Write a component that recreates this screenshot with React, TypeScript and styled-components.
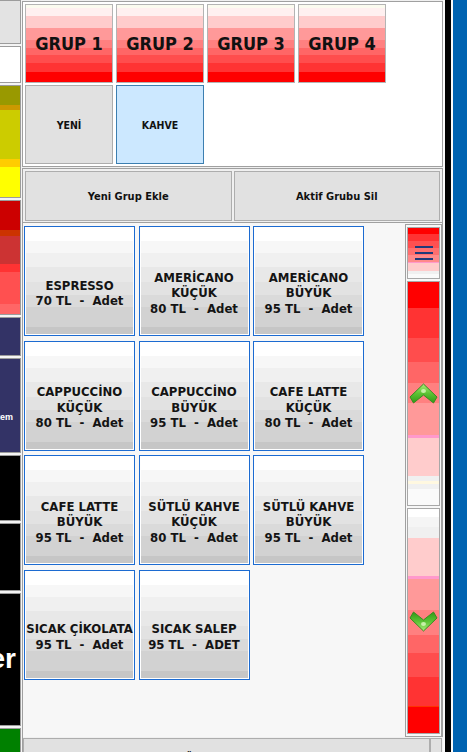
import React from "react";
import styled, { createGlobalStyle } from "styled-components";

const GlobalStyle = createGlobalStyle`
  html, body {
    margin: 0;
    padding: 0;
    overflow: hidden;
    background: #f0f0f0;
  }
  body {
    font-family: "DejaVu Sans Condensed", "DejaVu Sans", "Liberation Sans", sans-serif;
    font-stretch: condensed;
    color: #111;
  }
`;

const Screen = styled.div`
  display: flex;
  width: 467px;
  height: 752px;
  overflow: hidden;
`;

/* ---- left strip of clipped category tiles ---- */

const LeftStrip = styled.div`
  width: 22px;
  flex: none;
  display: flex;
  flex-direction: column;
  gap: 2px;
  background: #f4f4f4;
  overflow: hidden;
`;

const SideTile = styled.div<{ $h: number; $bg: string; $fs?: number; $pt?: number; $pr?: number }>`
  flex: none;
  width: 21px;
  height: ${(p) => p.$h}px;
  box-sizing: border-box;
  border: 1px solid #9c9c9c;
  border-left: none;
  background: ${(p) => p.$bg};
  display: flex;
  align-items: ${(p) => (p.$pt !== undefined ? "flex-start" : "center")};
  justify-content: flex-end;
  padding-top: ${(p) => p.$pt ?? 0}px;
  padding-right: ${(p) => p.$pr ?? 0}px;
  overflow: hidden;
  color: #fff;
  font-family: "Liberation Sans", sans-serif;
  font-weight: bold;
  font-size: ${(p) => p.$fs ?? 10}px;
  line-height: 1;
  white-space: nowrap;
`;

/* ---- main panel ---- */

const Main = styled.div`
  width: 421px;
  flex: none;
  display: flex;
  flex-direction: column;
  background: #f0f0f0;
  overflow: hidden;
`;

const GroupPanel = styled.div`
  flex: none;
  margin-top: 1px;
  height: 166px;
  box-sizing: border-box;
  border: 1px solid #a0a0a0;
  background: #fff;
  padding: 2px;
  display: flex;
  flex-direction: column;
  gap: 2px;
`;

const ButtonRow = styled.div`
  display: flex;
  gap: 3px;
`;

const GroupButton = styled.div`
  width: 88px;
  height: 79px;
  box-sizing: border-box;
  border: 1px solid #b4b4b4;
  background: linear-gradient(
    to bottom,
    #fbfbef 0 3.8%,
    #fff0f0 3.8% 14%,
    #ffcccc 14% 30.4%,
    #ff9999 30.4% 45.6%,
    #ff8080 45.6% 55.7%,
    #ff6666 55.7% 64.6%,
    #ff4d4d 64.6% 74.7%,
    #ff3333 74.7% 87.3%,
    #ff0000 87.3% 100%
  );
  display: flex;
  align-items: center;
  justify-content: center;
  font-weight: bold;
  font-size: 18px;
  color: #111;
`;

const SubButton = styled.div<{ $active?: boolean }>`
  width: 88px;
  height: 79px;
  box-sizing: border-box;
  border: 1px solid ${(p) => (p.$active ? "#3c7fb1" : "#adadad")};
  background: ${(p) => (p.$active ? "#cce8ff" : "#e1e1e1")};
  display: flex;
  align-items: center;
  justify-content: center;
  font-weight: bold;
  font-size: 10.5px;
`;

const ActionPanel = styled.div`
  flex: none;
  margin-top: 1px;
  height: 55px;
  box-sizing: border-box;
  border: 1px solid #a0a0a0;
  padding: 2px 2px 1px 2px;
  display: flex;
  gap: 2px;
`;

const ActionButton = styled.div`
  flex: 1;
  box-sizing: border-box;
  border: 1px solid #adadad;
  background: #e1e1e1;
  display: flex;
  align-items: center;
  justify-content: center;
  font-weight: bold;
  font-size: 11px;
`;

const ProductArea = styled.div`
  flex: none;
  height: 514px;
  box-sizing: border-box;
  display: flex;
  border-left: 1px solid #a0a0a0;
  border-right: 1px solid #a0a0a0;
  background: #f7f7f7;
  padding: 3px 0 0 1px;
`;

const ProductGrid = styled.div`
  display: grid;
  grid-template-columns: repeat(3, 111px);
  grid-auto-rows: 110px;
  column-gap: 3.5px;
  row-gap: 4.5px;
  align-content: start;
`;

const ProductButton = styled.div`
  box-sizing: border-box;
  border: 1px solid #1c6bd1;
  box-shadow: inset 0 0 0 1px #fff;
  background: linear-gradient(
    to bottom,
    #ffffff 0 12.7%,
    #f7f7f7 12.7% 24.5%,
    #f0f0f0 24.5% 37%,
    #e8e8e8 37% 51%,
    #e2e2e2 51% 63%,
    #dadada 63% 74.5%,
    #d2d2d2 74.5% 92.7%,
    #c6c6c6 92.7% 100%
  );
  display: flex;
  align-items: center;
  justify-content: center;
  padding-top: 24px;
  text-align: center;
  white-space: pre;
  font-weight: bold;
  font-size: 13px;
  line-height: 15.5px;
  color: #141414;
`;

const Spacer = styled.div`
  flex: 1;
`;

const ScrollColumn = styled.div`
  width: 37px;
  flex: none;
  margin-top: -2px;
  height: 513px;
  box-sizing: border-box;
  border: 1px solid #a0a0a0;
  padding: 2px 1px;
  display: flex;
  flex-direction: column;
  gap: 2px;
`;

const ScrollButton = styled.div<{ $h: number; $bg: string }>`
  height: ${(p) => p.$h}px;
  flex: none;
  box-sizing: border-box;
  border: 1px solid #a8a8a8;
  background: ${(p) => p.$bg};
  display: flex;
  align-items: center;
  justify-content: center;
`;

const ChevronSvg = styled.svg<{ $down?: boolean }>`
  display: block;
  transform: ${(p) => (p.$down ? "scaleY(-1)" : "none")};
`;

const BottomBar = styled.div`
  height: 40px;
  flex: none;
  box-sizing: border-box;
  border-left: 1px solid #a0a0a0;
  padding: 1px 1px 0 0;
  display: flex;
`;

const BottomButton = styled.div<{ $w?: number }>`
  ${(p) => (p.$w ? `width: ${p.$w}px; flex: none;` : "flex: 1;")}
  height: 40px;
  box-sizing: border-box;
  border: 1px solid #adadad;
  background: #e1e1e1;
  text-align: center;
  padding-top: 12px;
  font-weight: bold;
  font-size: 11px;
`;

const RightEdge = styled.div`
  flex: 1;
  background: linear-gradient(
    to right,
    #fafafa 0 2px,
    #000 2px 8px,
    #fafafa 8px 10px,
    #0063b1 10px
  );
`;

/* ---- drawings ---- */

const Hamburger = () => (
  <svg width="18" height="14" viewBox="0 0 18 14">
    <rect x="0" y="0" width="18" height="2" fill="#1f3a7a" />
    <rect x="0" y="6" width="18" height="2" fill="#1f3a7a" />
    <rect x="0" y="12" width="18" height="2" fill="#1f3a7a" />
  </svg>
);

const Chevron = ({ down, id }: { down?: boolean; id: string }) => (
  <ChevronSvg $down={down} width="29" height="22" viewBox="0 0 29 22">
    <defs>
      <linearGradient id={id} x1="0" y1="0" x2="0" y2="1">
        <stop offset="0" stopColor="#a8ee78" />
        <stop offset="0.5" stopColor="#5cc234" />
        <stop offset="1" stopColor="#2f9a17" />
      </linearGradient>
    </defs>
    <path
      d="M14.5 1 L28 14 L24.5 20 L14.5 12 L4.5 20 L1 14 Z"
      fill={`url(#${id})`}
      stroke="#3a8a22"
      strokeWidth="1"
      strokeLinejoin="round"
    />
    <ellipse cx="14.5" cy="8" rx="2.5" ry="2" fill="#d6f7b8" opacity="0.85" />
  </ChevronSvg>
);

/* ---- data ---- */

const sideTiles = [
  { h: 44, bg: "#e3e3e3" },
  { h: 37, bg: "#ffffff" },
  {
    h: 113,
    bg: "linear-gradient(to bottom, #999900 0 17%, #cc9900 17% 22%, #cccc00 22% 66%, #ffcc00 66% 73%, #ffff00 73% 100%)",
  },
  {
    h: 115,
    bg: "linear-gradient(to bottom, #cc0000 0 26%, #cc3300 26% 31%, #cc3333 31% 56%, #ff3333 56% 63%, #ff5050 63% 91%, #ff6666 91% 100%)",
  },
  { h: 39, bg: "#333366" },
  { h: 95, bg: "#333366", text: "Sistem", fs: 9, pt: 54, pr: 7 },
  { h: 66, bg: "#000000" },
  { h: 68, bg: "#000000" },
  { h: 133, bg: "#000000", text: "Diğer", fs: 28, pt: 51, pr: 4 },
  { h: 40, bg: "#008000" },
];

const groups = ["GRUP 1", "GRUP 2", "GRUP 3", "GRUP 4"];

const products = [
  "ESPRESSO\n70 TL  -  Adet",
  "AMERİCANO\nKÜÇÜK\n80 TL  -  Adet",
  "AMERİCANO\nBÜYÜK\n95 TL  -  Adet",
  "CAPPUCCİNO\nKÜÇÜK\n80 TL  -  Adet",
  "CAPPUCCİNO\nBÜYÜK\n95 TL  -  Adet",
  "CAFE LATTE\nKÜÇÜK\n80 TL  -  Adet",
  "CAFE LATTE\nBÜYÜK\n95 TL  -  Adet",
  "SÜTLÜ KAHVE\nKÜÇÜK\n80 TL  -  Adet",
  "SÜTLÜ KAHVE\nBÜYÜK\n95 TL  -  Adet",
  "SICAK ÇİKOLATA\n95 TL  -  Adet",
  "SICAK SALEP\n95 TL  -  ADET",
];

const menuBg =
  "linear-gradient(to bottom, #ff0000 0 11.5%, #ff3333 11.5% 25%, #ff5050 25% 40%, #ff6e6e 40% 54%, #ff8a8a 54% 69%, #ff99cc 69% 71%, #ffcccc 71% 85%, #f0f0f0 85% 92%, #fafafa 92% 100%)";

const upBg =
  "linear-gradient(to bottom, #ff0000 0 11.6%, #ff3333 11.6% 25.3%, #ff4d4d 25.3% 36%, #ff6666 36% 45.3%, #ff8080 45.3% 54.2%, #ff9999 54.2% 68.4%, #ff99cc 68.4% 69.8%, #ffcccc 69.8% 87.1%, #f0f0f0 87.1% 89.3%, #fff8e0 89.3% 90.7%, #f0f0f0 90.7% 92.9%, #fafafa 92.9% 100%)";

const downBg =
  "linear-gradient(to bottom, #ffffff 0 3.5%, #f5f5f5 3.5% 8%, #f0f0f0 8% 12.8%, #ffcccc 12.8% 30%, #ff99cc 30% 31.4%, #ff9999 31.4% 45.1%, #ff8080 45.1% 56.2%, #ff6666 56.2% 64.2%, #ff4d4d 64.2% 74.8%, #ff3333 74.8% 88%, #ff3300 88% 88.5%, #ff0000 88.5% 100%)";

export default function App() {
  return (
    <>
      <GlobalStyle />
      <Screen>
        <LeftStrip>
          {sideTiles.map((t, i) => (
            <SideTile key={i} $h={t.h} $bg={t.bg} $fs={t.fs} $pt={t.pt} $pr={t.pr}>
              {t.text}
            </SideTile>
          ))}
        </LeftStrip>

        <Main>
          <GroupPanel>
            <ButtonRow>
              {groups.map((g) => (
                <GroupButton key={g}>{g}</GroupButton>
              ))}
            </ButtonRow>
            <ButtonRow>
              <SubButton>YENİ</SubButton>
              <SubButton $active>KAHVE</SubButton>
            </ButtonRow>
          </GroupPanel>

          <ActionPanel>
            <ActionButton>Yeni Grup Ekle</ActionButton>
            <ActionButton>Aktif Grubu Sil</ActionButton>
          </ActionPanel>

          <ProductArea>
            <ProductGrid>
              {products.map((p) => (
                <ProductButton key={p}>{p}</ProductButton>
              ))}
            </ProductGrid>
            <Spacer />
            <ScrollColumn>
              <ScrollButton $h={52} $bg={menuBg}>
                <Hamburger />
              </ScrollButton>
              <ScrollButton $h={225} $bg={upBg}>
                <Chevron id="chevUp" />
              </ScrollButton>
              <ScrollButton $h={226} $bg={downBg}>
                <Chevron id="chevDown" down />
              </ScrollButton>
            </ScrollColumn>
          </ProductArea>

          <BottomBar>
            <BottomButton>Ürünü Düzenle</BottomButton>
            <BottomButton $w={12} />
          </BottomBar>
        </Main>

        <RightEdge />
      </Screen>
    </>
  );
}
